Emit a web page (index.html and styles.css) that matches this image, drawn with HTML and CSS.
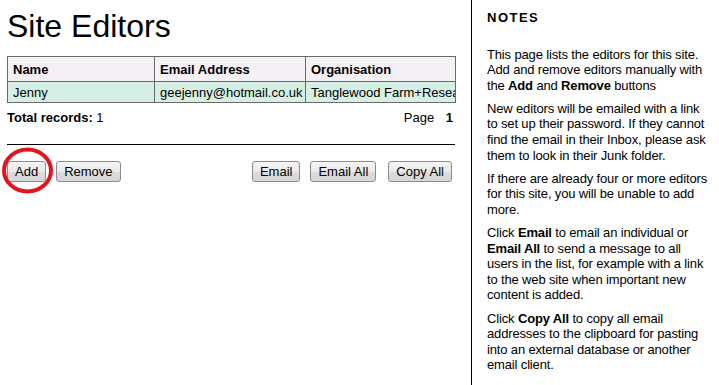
FILE: index.html
```html
<!DOCTYPE html>
<html>
<head lang="en">
    <meta charset="UTF-8">
    <title>Site Editors</title>
    <link rel="stylesheet" href="styles.css">
</head>
<body>
    <div id="page">
        <div id="main">
            <h1>Site Editors</h1>
            <table id="grid">
                <colgroup>
                    <col class="c-name">
                    <col class="c-email">
                    <col class="c-org">
                </colgroup>
                <thead>
                    <tr><th>Name</th><th>Email Address</th><th>Organisation</th></tr>
                </thead>
                <tbody>
                    <tr><td>Jenny</td><td>geejenny@hotmail.co.uk</td><td>Tanglewood Farm+Research</td></tr>
                </tbody>
            </table>
            <div id="pager">
                <span><b>Total records:</b> 1</span>
                <span>Page <b class="num">1</b></span>
            </div>
            <hr>
            <div id="actions">
                <div class="group">
                    <span class="marked">
                        <button>Add</button>
                        <svg class="ring" width="58" height="50" viewBox="0 0 58 50">
                            <ellipse cx="27.5" cy="23.5" rx="23.5" ry="21" fill="none" stroke="#e3141d" stroke-width="4"/>
                        </svg>
                    </span>
                    <button>Remove</button>
                </div>
                <div class="group">
                    <button>Email</button>
                    <button>Email All</button>
                    <button>Copy All</button>
                </div>
            </div>
        </div>
        <div id="notes">
            <h2>NOTES</h2>
            <p>This page lists the editors for this site. Add and remove editors manually with the <b>Add</b> and <b>Remove</b> buttons</p>
            <p>New editors will be emailed with a link to set up their password. If they cannot find the email in their Inbox, please ask them to look in their Junk folder.</p>
            <p>If there are already four or more editors for this site, you will be unable to add more.</p>
            <p>Click <b>Email</b> to email an individual or <b>Email All</b> to send a message to all users in the list, for example with a link to the web site when important new content is added.</p>
            <p>Click <b>Copy All</b> to copy all email addresses to the clipboard for pasting into an external database or another email client.</p>
        </div>
    </div>
</body>
</html>
```

FILE: styles.css
```css
*{
    margin: 0;
    padding: 0;
}
html, body{
    height: 100%;
}
body{
    font: 13px "Liberation Sans", Arial, sans-serif;
    color: #000;
    background: #fff;
}
#page{
    display: flex;
    height: 100%;
}
#main{
    width: 448px;
    padding: 8px 16px 0 7px;
}
h1{
    font-size: 32px;
    font-weight: normal;
    line-height: 37px;
    margin-bottom: 11px;
}
#grid{
    width: 448px;
    table-layout: fixed;
    border-collapse: collapse;
    border: 1px solid #6a6a6a;
}
#grid .c-name{ width: 147px; }
#grid .c-email{ width: 151px; }
#grid .c-org{ width: 150px; }
#grid th, #grid td{
    border: 1px solid #6a6a6a;
    padding: 0 5px;
    text-align: left;
    white-space: nowrap;
    overflow: hidden;
}
#grid th{
    height: 24px;
    background: #f5f0f5;
}
#grid td{
    height: 20px;
    background: #d6efe4;
}
#pager{
    display: flex;
    justify-content: space-between;
    margin-top: 7px;
    line-height: 15px;
}
#pager .num{
    margin-left: 8px;
    margin-right: 2px;
}
hr{
    border: 0;
    border-top: 1px solid #000;
    margin-top: 19px;
}
#actions{
    display: flex;
    justify-content: space-between;
    margin-top: 16px;
    padding-right: 3px;
}
#actions .group{
    display: flex;
    gap: 10px;
}
#actions .group + .group button + button + button{
    margin-left: 2px;
}
button{
    font: 13px "Liberation Sans", Arial, sans-serif;
    color: #000;
    height: 21px;
    padding: 0 7px;
    border: 1px solid #8c8c8c;
    border-radius: 3px;
    background: linear-gradient(#f6f6f6, #e9e9e9 50%, #dcdcdc 51%, #d6d6d6);
}
.marked{
    position: relative;
    display: flex;
}
.ring{
    position: absolute;
    left: -7px;
    top: -14px;
    pointer-events: none;
}
#notes{
    flex: 1;
    border-left: 1px solid #000;
    padding: 10px 6px 0 15px;
    line-height: 15.6px;
}
#notes h2{
    font-size: 13px;
    letter-spacing: 1.5px;
    margin-bottom: 21px;
}
#notes p{
    margin-bottom: 7.5px;
    letter-spacing: -0.15px;
}
```
